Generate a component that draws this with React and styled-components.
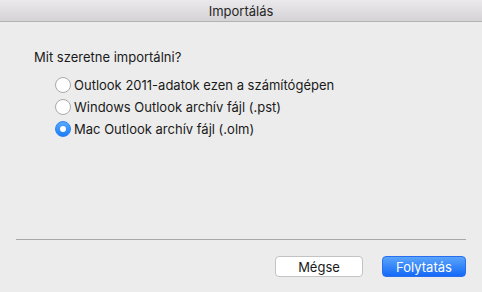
import styled, { createGlobalStyle } from "styled-components";

const Global = createGlobalStyle`
    html, body {
        margin: 0;
        padding: 0;
        background: #ececec;
    }
    body {
        font-family: Inter, "Liberation Sans", Arial, sans-serif;
        font-size: 13px;
        color: #1a1a1a;
    }
`;

const Window = styled.div`
    width: 482px;
    height: 292px;
    display: flex;
    flex-direction: column;
    background: #ececec;
    overflow: hidden;
`;

const TitleBar = styled.div`
    height: 21px;
    flex: none;
    display: flex;
    align-items: center;
    justify-content: center;
    background: linear-gradient(#ebe9eb, #d5d3d5);
    border-bottom: 1px solid #b3b3b3;
    font-size: 13px;
    color: #262626;
`;

const Body = styled.div`
    flex: 1;
    display: flex;
    flex-direction: column;
    padding: 27px 16px 0;
`;

const Question = styled.div`
    padding-left: 18px;
    line-height: 16px;
    margin-bottom: 12px;
`;

const Options = styled.div`
    display: flex;
    flex-direction: column;
    gap: 6px;
    padding-left: 39px;
`;

const Option = styled.label`
    display: flex;
    align-items: center;
    gap: 3px;
    height: 16px;
`;

const Radio = styled.span`
    width: 16px;
    height: 16px;
    flex: none;
    border-radius: 50%;
    box-sizing: border-box;
    display: flex;
    align-items: center;
    justify-content: center;
    border: 1px solid ${(p) => (p.$checked ? "#2f82f3" : "#a9a9a9")};
    background: ${(p) =>
        p.$checked ? "linear-gradient(#59a9fd, #1a7ef6)" : "#fff"};
    &::after {
        content: "";
        width: 6px;
        height: 6px;
        border-radius: 50%;
        background: #fff;
        display: ${(p) => (p.$checked ? "block" : "none")};
    }
`;

const Spacer = styled.div`
    flex: 1;
`;

const Separator = styled.div`
    height: 1px;
    background: #a8a8a8;
    margin: 0 0 16px;
`;

const Buttons = styled.div`
    display: flex;
    justify-content: flex-end;
    gap: 19px;
    margin-bottom: 15px;
`;

const Button = styled.button`
    height: 21px;
    box-sizing: border-box;
    font-family: inherit;
    font-size: 13px;
    border-radius: 4px;
    padding: 0;
    width: ${(p) => p.$w}px;
    border: 1px solid ${(p) => (p.$primary ? "#2a6ef0" : "#c3c3c3")};
    background: ${(p) =>
        p.$primary ? "linear-gradient(#5aa4fb, #1569f7)" : "#fff"};
    color: ${(p) => (p.$primary ? "#fff" : "#1a1a1a")};
`;

const options = [
    "Outlook 2011-adatok ezen a számítógépen",
    "Windows Outlook archív fájl (.pst)",
    "Mac Outlook archív fájl (.olm)",
];

export default function App() {
    const selected = 2;
    return (
        <>
            <Global />
            <Window>
                <TitleBar>Importálás</TitleBar>
                <Body>
                    <Question>Mit szeretne importálni?</Question>
                    <Options>
                        {options.map((o, i) => (
                            <Option key={i}>
                                <Radio $checked={i === selected} />
                                {o}
                            </Option>
                        ))}
                    </Options>
                    <Spacer />
                    <Separator />
                    <Buttons>
                        <Button $w={88}>Mégse</Button>
                        <Button $w={84} $primary>Folytatás</Button>
                    </Buttons>
                </Body>
            </Window>
        </>
    );
}
